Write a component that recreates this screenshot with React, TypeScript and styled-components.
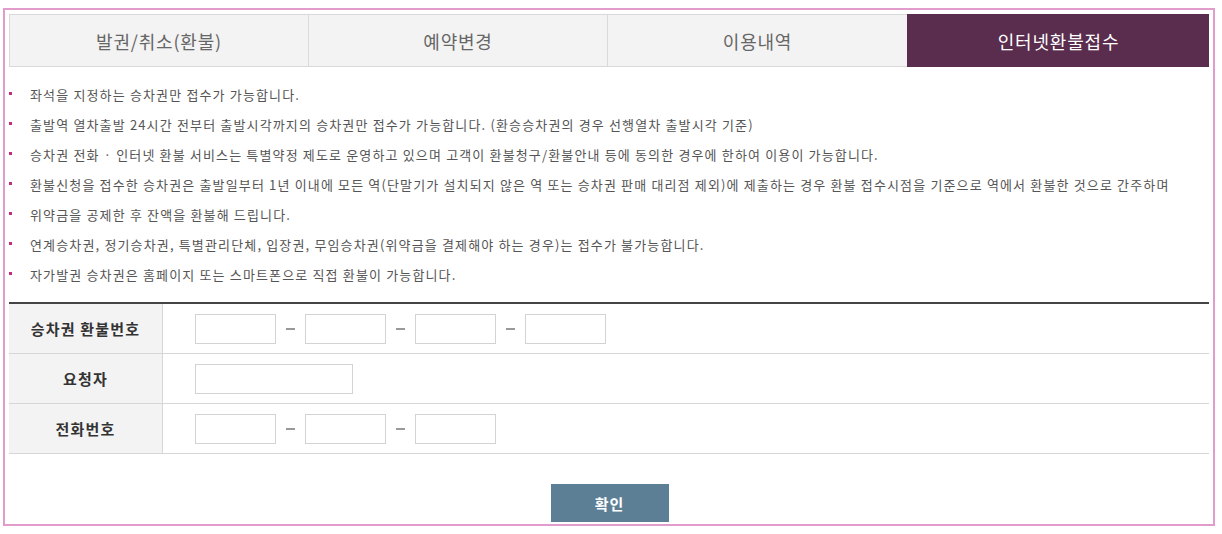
import styled, { createGlobalStyle } from 'styled-components';

const GlobalStyle = createGlobalStyle`
	html, body {
		margin: 0;
		padding: 0;
		background: #fff;
	}
	body {
		font-family: 'Noto Sans CJK KR', 'Noto Sans', sans-serif;
	}
`;

const Frame = styled.div`
	margin: 8px 0 0 3px;
	width: 1212px;
	height: 518px;
	border: 2px solid #e29ccb;
	box-sizing: border-box;
	padding: 4px 3px 0 4px;
	display: flex;
	flex-direction: column;
`;

const Tabs = styled.ul`
	display: flex;
	margin: 0;
	padding: 0;
	list-style: none;
	width: 1200px;
	height: 53px;
	box-sizing: border-box;
	border-top: 1px solid #d9d9d9;
	border-bottom: 1px solid #d9d9d9;
`;

const Tab = styled.li<{ $active?: boolean; $width: number }>`
	width: ${(p) => p.$width}px;
	box-sizing: border-box;
	display: flex;
	justify-content: center;
	align-items: center;
	font-size: 18px;
	letter-spacing: 0.8px;
	color: ${(p) => (p.$active ? '#fff' : '#666')};
	background-color: ${(p) => (p.$active ? '#5a2c4d' : '#f3f3f3')};
	border-left: 1px solid ${(p) => (p.$active ? '#5a2c4d' : '#d9d9d9')};
	margin-top: ${(p) => (p.$active ? '-1px' : '0')};
	margin-bottom: ${(p) => (p.$active ? '-1px' : '0')};
	&:first-child {
		border-left: 1px solid #d9d9d9;
	}
`;

const Notice = styled.ul`
	margin: 13px 0 0;
	padding: 0;
	list-style: none;
	li {
		position: relative;
		height: 30px;
		line-height: 30px;
		padding-left: 21px;
		font-size: 13px;
		color: #555;
		letter-spacing: 1.15px;
		white-space: nowrap;
		&::before {
			position: absolute;
			content: '';
			top: 12px;
			left: 0;
			width: 3px;
			height: 3px;
			background-color: #c42c7c;
		}
	}
`;

const FormTable = styled.table`
	margin-top: 12px;
	width: 1200px;
	border-collapse: collapse;
	border-top: 2px solid #444;
	th,
	td {
		height: 49px;
		border-bottom: 1px solid #d6d6d6;
		padding: 0;
	}
	th {
		width: 153px;
		background-color: #f3f3f3;
		border-right: 1px solid #d6d6d6;
		font-size: 15px;
		letter-spacing: 1.2px;
		font-weight: 700;
		color: #333;
		text-align: center;
	}
	td {
		padding-left: 32px;
	}
`;

const Fields = styled.div`
	display: flex;
	align-items: center;
`;

const Field = styled.input<{ $wide?: boolean }>`
	width: ${(p) => (p.$wide ? '158px' : '81px')};
	height: 30px;
	box-sizing: border-box;
	border: 1px solid #d3d3d3;
	background: #fff;
	padding: 0 6px;
	font-size: 12px;
	outline: none;
`;

const Dash = styled.span`
	width: 29px;
	height: 30px;
	display: flex;
	justify-content: center;
	align-items: center;
	&::before {
		content: '';
		width: 9px;
		height: 2px;
		background-color: #999;
	}
`;

const ButtonArea = styled.div`
	display: flex;
	justify-content: center;
	margin-top: 30px;
`;

const Confirm = styled.button`
	width: 118px;
	height: 38px;
	border: 0;
	background-color: #5d7f96;
	color: #fff;
	font-family: inherit;
	font-size: 15px;
	letter-spacing: 1px;
	font-weight: 700;
	cursor: pointer;
`;

const notices = [
	'좌석을 지정하는 승차권만 접수가 가능합니다.',
	'출발역 열차출발 24시간 전부터 출발시각까지의 승차권만 접수가 가능합니다. (환승승차권의 경우 선행열차 출발시각 기준)',
	'승차권 전화 · 인터넷 환불 서비스는 특별약정 제도로 운영하고 있으며 고객이 환불청구/환불안내 등에 동의한 경우에 한하여 이용이 가능합니다.',
	'환불신청을 접수한 승차권은 출발일부터 1년 이내에 모든 역(단말기가 설치되지 않은 역 또는 승차권 판매 대리점 제외)에 제출하는 경우 환불 접수시점을 기준으로 역에서 환불한 것으로 간주하며',
	'위약금을 공제한 후 잔액을 환불해 드립니다.',
	'연계승차권, 정기승차권, 특별관리단체, 입장권, 무임승차권(위약금을 결제해야 하는 경우)는 접수가 불가능합니다.',
	'자가발권 승차권은 홈페이지 또는 스마트폰으로 직접 환불이 가능합니다.',
];

const tabs = [
	{ label: '발권/취소(환불)', width: 299 },
	{ label: '예약변경', width: 299 },
	{ label: '이용내역', width: 300 },
	{ label: '인터넷환불접수', width: 302 },
];

export default function App() {
	return (
		<>
			<GlobalStyle />
			<Frame>
				<Tabs>
					{tabs.map((t, i) => (
						<Tab key={t.label} $width={t.width} $active={i === 3}>
							{t.label}
						</Tab>
					))}
				</Tabs>

				<Notice>
					{notices.map((n) => (
						<li key={n}>{n}</li>
					))}
				</Notice>

				<FormTable>
					<tbody>
						<tr>
							<th>승차권 환불번호</th>
							<td>
								<Fields>
									<Field />
									<Dash />
									<Field />
									<Dash />
									<Field />
									<Dash />
									<Field />
								</Fields>
							</td>
						</tr>
						<tr>
							<th>요청자</th>
							<td>
								<Fields>
									<Field $wide />
								</Fields>
							</td>
						</tr>
						<tr>
							<th>전화번호</th>
							<td>
								<Fields>
									<Field />
									<Dash />
									<Field />
									<Dash />
									<Field />
								</Fields>
							</td>
						</tr>
					</tbody>
				</FormTable>

				<ButtonArea>
					<Confirm>확인</Confirm>
				</ButtonArea>
			</Frame>
		</>
	);
}
